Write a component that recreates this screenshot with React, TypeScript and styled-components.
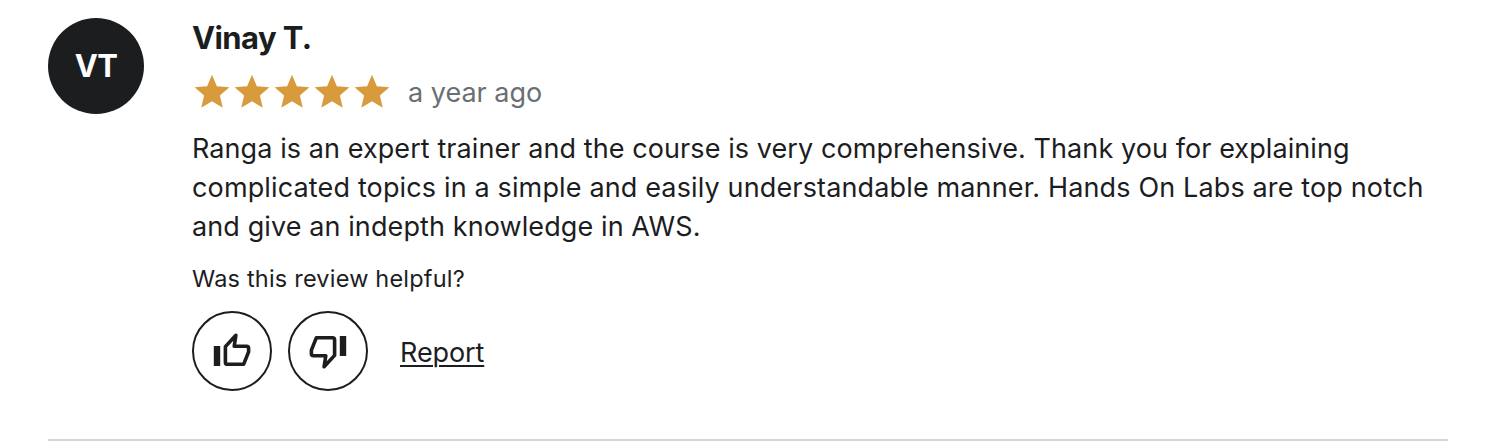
import React from "react";
import styled, { createGlobalStyle } from "styled-components";

const GlobalStyle = createGlobalStyle`
  * { box-sizing: border-box; }
  body {
    margin: 0;
    background: #fff;
    color: #1c1d1f;
    font-family: Inter, "Liberation Sans", sans-serif;
  }
`;

const Review = styled.article`
  display: flex;
  align-items: flex-start;
  gap: 48px;
  height: 441px;
  margin: 0 50px 0 48px;
  padding-top: 18px;
  border-bottom: 2px solid #d1d7dc;
`;

const Avatar = styled.div`
  display: flex;
  align-items: center;
  justify-content: center;
  flex: none;
  width: 96px;
  height: 96px;
  padding-bottom: 2px;
  border-radius: 50%;
  background: #1c1d1f;
  color: #fff;
  font-size: 31px;
  font-weight: 700;
  letter-spacing: -0.6px;
`;

const Content = styled.div`
  flex: 1;
  min-width: 0;
`;

const Name = styled.h2`
  margin: 0;
  font-size: 31px;
  font-weight: 700;
  line-height: 40px;
  letter-spacing: -0.6px;
`;

const Rating = styled.div`
  display: flex;
  align-items: center;
  height: 40px;
  margin-top: 14px;
`;

const StarIcon = styled.svg`
  width: 40px;
  height: 40px;
  fill: #d99a3c;
`;

const Age = styled.span`
  margin: 2px 0 0 16px;
  color: #6a6f73;
  font-size: 27px;
  line-height: 40px;
`;

const Comment = styled.p`
  margin: 17px 0 0;
  font-size: 27px;
  line-height: 39px;
`;

const Line = styled.span<{ $tracking: number }>`
  display: block;
  white-space: nowrap;
  letter-spacing: ${(p) => p.$tracking}px;
`;

const Question = styled.p`
  margin: 16px 0 0;
  font-size: 23.5px;
  line-height: 34px;
  letter-spacing: 0.2px;
`;

const Actions = styled.div`
  display: flex;
  align-items: center;
  gap: 16px;
  margin-top: 15px;
`;

const VoteButton = styled.button`
  display: flex;
  align-items: center;
  justify-content: center;
  width: 80px;
  height: 80px;
  padding: 0;
  border: 2px solid #1c1d1f;
  border-radius: 50%;
  background: transparent;
  color: inherit;
`;

const ThumbIcon = styled.svg<{ $down?: boolean }>`
  width: 40px;
  height: 40px;
  transform: ${(p) => (p.$down ? "rotate(180deg)" : "none")};
`;

const ReportLink = styled.a`
  margin: 3px 0 0 16px;
  color: inherit;
  font-size: 27px;
  line-height: 40px;
  letter-spacing: -0.1px;
  text-decoration: underline;
  text-decoration-thickness: 2px;
  text-underline-offset: 3px;
`;

const Thumb = ({ down }: { down?: boolean }) => (
  <ThumbIcon viewBox="0 0 40 40" $down={down} aria-hidden="true">
    <rect x="1.8" y="15" width="6.4" height="20" fill="currentColor" />
    <path
      d="M22.2 15.2 23.9 4.2 13.4 15.6V31.2a2.1 2.1 0 0 0 2.1 2.1H31.6L36.6 20.8V17.2a2 2 0 0 0-2-2Z"
      fill="none"
      stroke="currentColor"
      strokeWidth="3.6"
      strokeLinejoin="round"
    />
  </ThumbIcon>
);

const Star = () => (
  <StarIcon viewBox="0.5 0.45 23 23" aria-hidden="true">
    <path d="M12 17.27 18.18 21l-1.64-7.03L22 9.24l-7.19-.61L12 2 9.19 8.63 2 9.24l5.46 4.73L5.82 21z" />
  </StarIcon>
);

const comment = [
  { text: "Ranga is an expert trainer and the course is very comprehensive. Thank you for explaining", tracking: 0.08 },
  { text: "complicated topics in a simple and easily understandable manner. Hands On Labs are top notch", tracking: 0.143 },
  { text: "and give an indepth knowledge in AWS.", tracking: 0.1 },
];

export default function App() {
  return (
    <>
      <GlobalStyle />
      <Review>
        <Avatar>VT</Avatar>
        <Content>
          <Name>Vinay T.</Name>
          <Rating>
            {[1, 2, 3, 4, 5].map((n) => (
              <Star key={n} />
            ))}
            <Age>a year ago</Age>
          </Rating>
          <Comment>
            {comment.map((line) => (
              <Line key={line.text} $tracking={line.tracking}>
                {line.text}
              </Line>
            ))}
          </Comment>
          <Question>Was this review helpful?</Question>
          <Actions>
            <VoteButton aria-label="Helpful">
              <Thumb />
            </VoteButton>
            <VoteButton aria-label="Not helpful">
              <Thumb down />
            </VoteButton>
            <ReportLink>Report</ReportLink>
          </Actions>
        </Content>
      </Review>
    </>
  );
}
